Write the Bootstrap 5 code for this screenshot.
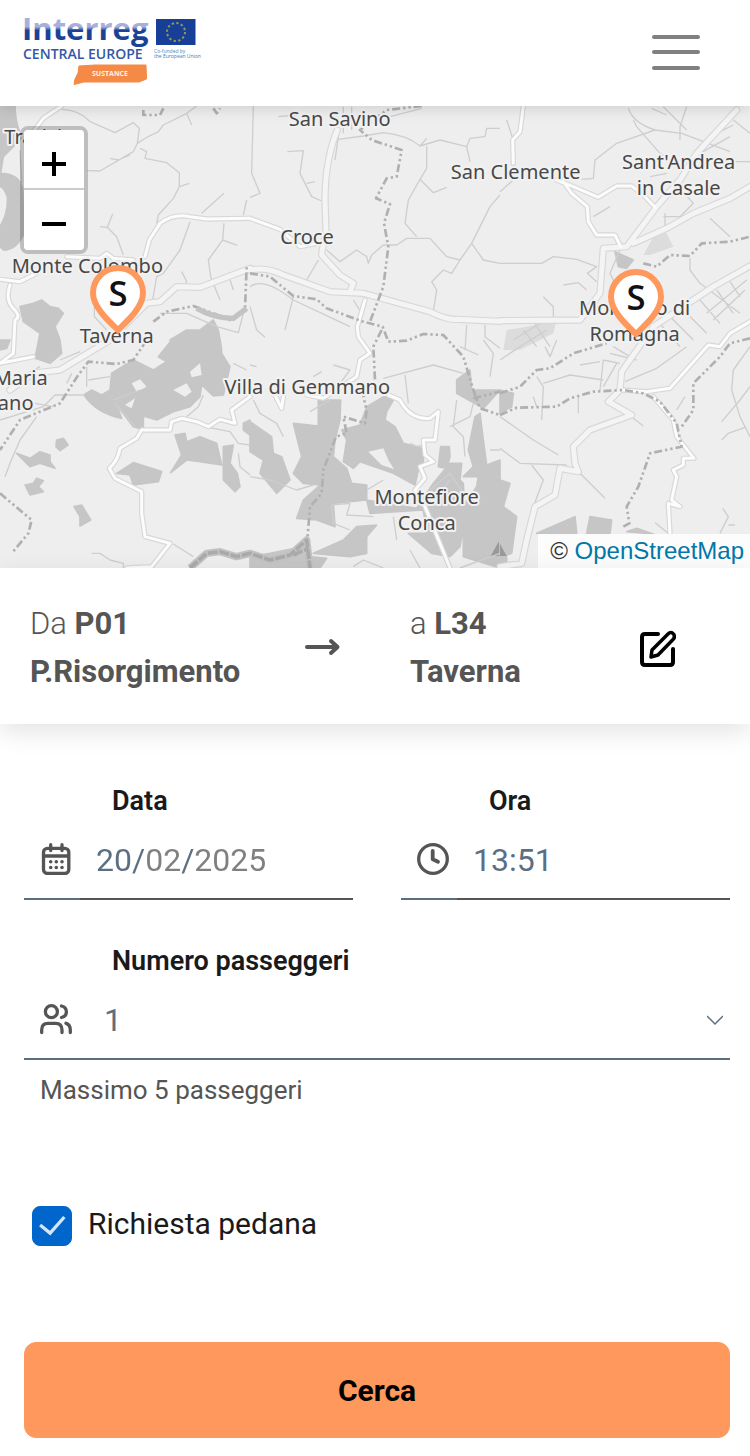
<!DOCTYPE html>
<html lang="it">
<head>
<meta charset="utf-8">
<meta name="viewport" content="width=device-width, initial-scale=1">
<title>Sustance - Prenotazione</title>
<link href="https://cdn.jsdelivr.net/npm/bootstrap@5.3.0/dist/css/bootstrap.min.css" rel="stylesheet">
<style>
  body { font-family: Roboto, "Noto Sans", sans-serif; color: #1a1a1a; background: #fff; }
  .site-bar { padding: 16px 44px 16px 24px; box-shadow: 0 2px 14px rgba(0,0,0,.14); z-index: 3; }
  .site-logo { width: 176px; height: 74px; overflow: visible; }
  .site-bar .navbar-toggler { padding: 0 6px; border: 0; }
  .map-view { background: #eee; }
  .map-view > svg { aspect-ratio: 750 / 462; }
  .wood { fill: #c6c6c6; stroke: #c6c6c6; stroke-width: 5; stroke-linejoin: round; }
  .clearing { fill: #eee; }
  .lane { fill: none; stroke: #cecece; stroke-width: 4; stroke-linejoin: round; }
  .road-set { fill: none; stroke-linejoin: round; stroke-linecap: round; }
  .edge { stroke: #d8d8d8; }
  .fill-road { stroke: #f8f8f8; }
  .edge .wide { stroke-width: 22; }
  .edge .slim { stroke-width: 16; }
  .fill-road .wide { stroke-width: 15; stroke: #f4f4f4; }
  .fill-road .slim { stroke-width: 9; stroke: #fcfcfc; }
  .limit { fill: none; stroke: #b0b0b0; stroke-width: 8; stroke-dasharray: 24 9 7 9 7 9; stroke-linejoin: round; }
  .ridge { fill: none; stroke: #aaa; stroke-width: 11; stroke-linejoin: round; }
  .place { font: 400 60px "Noto Sans", sans-serif; fill: #484848; stroke: #f1f1f1; stroke-width: 12; stroke-linejoin: round; paint-order: stroke; text-anchor: middle; }
  .pin-letter { font: 600 104px "Open Sans", sans-serif; fill: #111; text-anchor: middle; }
  .zoom-box { top: 20px; left: 20px; border: 4px solid rgba(0,0,0,.2); border-radius: 8px; background-clip: padding-box; }
  .zoom-box button { width: 60px; height: 60px; border: 0; padding: 0; background: #fff; display: flex; align-items: center; justify-content: center; border-radius: 0 0 4px 4px; }
  .zoom-box button:first-child { border-bottom: 2px solid #ccc; border-radius: 4px 4px 0 0; }
  .credit { background: rgba(255,255,255,.8); font: 24px/34px "Liberation Sans", sans-serif; color: #333; padding: 0 6px 0 12px; }
  .credit a { color: #0078a8; text-decoration: none; }
  .route-bar { display: grid; grid-template-columns: 275fr 105fr 230fr 110fr; padding: 32px 0 28px 30px; box-shadow: 0 8px 24px rgba(0,0,0,.11); color: #555; font-size: 31px; line-height: 48px; font-weight: 300; }
  .route-bar strong { font-weight: 700; }
  .trip-form { padding: 58px 20px 18px 24px; }
  .trip-form .row { --bs-gutter-x: 48px; --bs-gutter-y: 42px; }
  .field-label { display: block; font-size: 27px; line-height: 38px; font-weight: 600; padding-left: 88px; }
  .line-group { height: 80px; }
  .line-icon { width: 56px; padding: 0 8px 0 16px; border-bottom: 2px solid #5c6f82; color: #555; display: flex; align-items: center; }
  .line-group .form-control, .line-group .form-select { border: 0; border-bottom: 2px solid #555; border-radius: 0; font-size: 32px; line-height: 48px; color: #5c6f82; padding: 2px 16px 0; background-color: transparent; }
  .line-group .form-select { border-color: #5c6f82; padding-left: 24px; background-position: right 7px center; background-size: 16px 16px;
    background-image: url("data:image/svg+xml,%3csvg xmlns='http://www.w3.org/2000/svg' viewBox='0 0 16 16'%3e%3cpath fill='none' stroke='%235c6f82' stroke-width='1.5' d='M0 5l8 8 8-8'/%3e%3c/svg%3e"); }
  /* the day and the separators are darker than month and year */
  .line-group .date-text { -webkit-text-fill-color: transparent; background: linear-gradient(90deg, #5c6f82 0 65px, #808080 65px 101px, #5c6f82 101px 114px, #808080 114px); -webkit-background-clip: text; background-clip: text; }
  .field-help { font-size: 26px; line-height: 40px; color: #555; padding: 10px 16px 0; }
  .ramp-check { gap: 16px; padding: 96px 8px; min-height: 0; margin: 0; }
  .ramp-check .form-check-input { width: 40px; height: 40px; border-radius: 8px; margin: 0; float: none; flex: none; }
  .ramp-check .form-check-input:checked { background-color: #06c; border-color: #06c;
    background-image: url("data:image/svg+xml,%3csvg xmlns='http://www.w3.org/2000/svg' viewBox='0 0 40 40'%3e%3cpath fill='none' stroke='%23d5e5f5' stroke-width='3.5' d='M7.500 19l10.500 8.500L33 10.500'/%3e%3c/svg%3e"); }
  .ramp-check label { font-size: 30px; line-height: 36px; }
  .search-btn { --bs-btn-bg: #ff985c; --bs-btn-color: #000; --bs-btn-hover-bg: #f58a4b; --bs-btn-border-color: #ff985c; height: 96px; border-radius: 12px; font-size: 30px; font-weight: 700; }
</style>
</head>
<body>
<nav class="navbar site-bar bg-white position-relative">
  <a class="navbar-brand p-0 m-0 d-flex" href="#" aria-label="Interreg Central Europe Sustance">
    <svg class="site-logo" viewBox="24 16 176 74">
      <defs><linearGradient id="inkFade" gradientUnits="userSpaceOnUse" x1="0" x2="0" y1="18" y2="44"><stop offset=".34" stop-color="#a9afdc"/><stop offset=".48" stop-color="#1c4296"/></linearGradient></defs>
      <text x="22" y="40" font-family="Open Sans" font-weight="700" font-size="31" fill="url(#inkFade)">Interreg</text>
      <text x="23" y="59" font-family="Open Sans" font-weight="600" font-size="14" fill="#3457a5">CENTRAL EUROPE</text>
      <rect x="156" y="19" width="39.500" height="26" fill="#173f97"/>
      <circle cx="176" cy="32" r="9" fill="none" stroke="#8f9a4c" stroke-width="2" stroke-dasharray="2.400 2.312"/>
      <text x="154" y="53" font-family="Open Sans" font-size="5" fill="#4a86bd">Co-funded by</text>
      <text x="154" y="58" font-family="Open Sans" font-size="5" fill="#3f78b5">the European Union</text>
      <path d="M79 66L95 65 146 65 146.500 79 139 82 84 82 74 84.500 75 79 78 73Z" fill="#f48a45" stroke="#f48a45" stroke-linejoin="round"/>
      <text x="110" y="75.500" text-anchor="middle" font-family="Open Sans" font-weight="700" font-size="7" fill="#fff0e6">SUSTANCE</text>
    </svg>
  </a>
  <button class="navbar-toggler" type="button" aria-label="Menu">
    <svg class="d-block" width="48" height="36" viewBox="0 0 48 36" stroke="#808080" stroke-width="4" stroke-linecap="round"><path d="M2 2H46M2 17H46M2 33H46"/></svg>
  </button>
</nav>

<section class="map-view position-relative overflow-hidden" aria-label="Mappa">
  <svg class="d-block w-100" viewBox="0 18 2250 1386">
    <!-- woods -->
    <path class="wood" d="M0 18H45Q48 90 70 110L10 170 0 230ZM0 220Q60 220 68 270L72 400Q50 450 10 450L0 440V380Q25 340 22 290Q10 260 0 260ZM60 620L100 610 125 600 150 620 175 625 190 640 165 680 180 720 185 760 150 790 105 775 120 700 70 665ZM510 720L560 690 600 690 640 660 655 690 665 750 540 760Z"/>
    <g transform="translate(0 720)">
      <path class="wood" d="M475 50L515 0H660L665 40 690 80 670 165 640 168 605 135 600 170 570 200 520 215 470 240 430 228 430 268 400 260 350 195 365 235Q290 220 252 165L275 150 305 165 330 150 335 100 400 60 460 90 500 65ZM170 300L190 295 204 315 180 332 168 320ZM50 340L90 355 120 335 150 345V365L165 385 120 370 90 380ZM75 435L100 430 110 415 130 422 115 440 130 455 90 465ZM222 500L245 495 272 540 240 558V530ZM350 400L400 368 485 395 475 425 400 435 390 405ZM525 285L555 280 560 305 600 290 650 310 665 375 600 365 560 360 512 398 545 345ZM670 320L700 315 690 370 712 400 720 440 705 455 670 420ZM730 250L750 240V285L730 270ZM0 0H30L20 25 0 30Z"/>
      <path class="clearing" d="M395 130L420 118 440 140 410 155ZM520 150L560 130 575 155 555 170ZM570 95L600 70 605 105 575 112ZM375 195L405 175 395 205Z"/>
    </g>
    <g transform="translate(750 720)">
      <path class="wood" d="M0 245L65 290 70 340 95 350 120 420 80 460 30 400 40 360 0 335ZM130 250L205 258V180H272L270 240 255 300 250 350 290 385 305 430 350 435V480L250 490 255 560 200 540 140 535 160 480 210 435 160 430 130 400 155 350ZM280 365L290 300 275 270 330 255 350 200 410 165 430 180 410 215 405 240 435 260 450 290 460 310 520 325V370L505 390 495 435 430 400 330 365 310 385ZM350 480L500 505 550 430 600 370H635L630 420 640 430 645 530 630 620 600 650 545 640 475 580 530 580 520 510 360 520ZM572 320L598 320 600 350 590 385 565 380ZM690 220L700 300 710 375 750 360V684L640 650 640 500 680 440 685 410 640 410 670 380 655 330 675 230ZM620 120L660 90 665 150 750 150 700 205 620 160ZM190 640L280 600 320 560 380 555 350 590V640L300 650ZM0 650L60 640 160 620 180 650 230 655 210 684H0Z"/>
      <path class="clearing" d="M355 335L400 325 415 360 432 388 395 375Z"/>
      <path fill="#999" d="M722 648L746 605 770 648Z"/>
    </g>
    <g transform="translate(1500 720)">
      <path class="wood" d="M0 420L30 430 10 500 50 530 35 640 20 645V684H0ZM110 580L225 530 230 580ZM270 530L335 540 330 580H260ZM380 575L410 565 460 582ZM0 150L40 160 35 200 0 220Z"/>
      <path fill="#999" d="M0 612L20 648H0Z"/>
    </g>
    <g transform="translate(1500 0)">
      <path class="wood" d="M345 455L400 480 380 505 355 500Z"/>
      <path fill="#dcdcdc" d="M430 465L460 410 500 400 520 440 450 465ZM20 690L80 680 170 660 160 700 60 750 10 750Z"/>
    </g>
    <!-- lanes -->
    <path class="lane" d="M185 28Q240 30 270 65L345 98 400 68 418 85 412 130Q440 110 475 95L490 75 560 40 590 18M412 130L400 155 300 213 262 212M420 145L440 155 435 175 500 188 538 218V260L520 295 475 345 470 370M538 260L568 250M338 342L322 382 350 410 370 465M300 380L322 382M605 340L672 280M570 365L540 450 490 520 470 530 458 600M672 370L668 420 625 480 632 530 660 600M668 420L712 436M545 515L560 545 550 570M690 540L700 570M560 40L575 75M283 590V650L320 690M730 345L740 300M480 640L560 640 650 680 715 698 730 640M65 250L60 150M330 175L355 180 390 165"/>
    <path class="lane" transform="translate(750 0)" d="M265 118L340 108 400 98Q470 105 510 138L530 115M510 138L570 120 650 140 660 115 705 110 710 85 750 85M530 138V205L510 238 475 300 465 370 500 410M510 238L550 278 590 262M230 450L270 485 320 450 350 470 355 490 365 465 400 435 440 435 470 415 540 415 590 470 630 480 665 430 720 320 750 285M665 430L700 480 750 490M630 480L605 520 580 510 545 545 560 570 550 635M10 18L5 220 30 280 0 292M112 155L160 152 150 220 185 290 215 303M265 110L255 180M205 480L170 540M0 560Q40 530 130 600L300 680M130 590L105 690M0 620L20 690 45 712M400 55L515 25M310 600L335 640M650 675L645 750M705 675V710L750 745M280 20V100M305 20V90M85 50L140 45M170 250L195 245M650 140L660 185"/>
    <path class="lane" transform="translate(1500 0)" d="M385 25Q400 70 465 90L350 130 285 180 280 235 245 238M465 90L545 100 690 155M400 60L410 80 480 160 540 210M490 20L560 90M560 20L540 80V120M0 490H125L160 470 230 478 290 500 262 520 290 545M330 320L280 350M20 60L40 120M0 275L40 240M190 555L235 548 260 570M130 590L160 620V660M540 265L580 310 540 350 490 350M630 355L690 410M700 60L750 100M750 185H640M570 475V510L600 550 720 640M600 160L690 110M40 720L120 670M60 740L140 690M100 665L150 740M70 690L110 740M620 640L740 540M640 660L735 570M560 640L620 700M600 600L660 670M650 570L700 640M690 545L720 590M500 640L580 720M470 660L540 740M455 25L500 45M650 100L700 75M360 450L330 520 350 560M450 230L500 220M495 340V400"/>
    <path class="lane" transform="translate(0 720)" d="M110 230L60 300 30 370 15 410M0 240L130 200 165 165 255 165M275 640L300 640 330 660 370 670V684M520 612L580 650M610 165L595 200 560 230M345 190L410 265M625 262L690 275 715 310 750 315M715 340L720 380 750 405M260 80V140M200 130L215 100M265 120L330 110M700 70L740 90M340 180L420 150M30 130L120 80M105 190L160 200M180 60L240 35"/>
    <path class="lane" transform="translate(750 720)" d="M400 115L550 75 640 100M465 105L475 190M0 410L60 420 140 450 190 435M245 495L300 490 290 525 370 530M10 180L30 220 80 250 100 290M180 215L240 180M250 75L300 90 270 130M630 20L685 45M700 0L730 40 720 110M620 180L610 260 640 290 645 350M600 260L660 230 670 190M720 330H750M480 630L510 684M310 680L340 660 400 684M480 310L500 320 520 315M430 530L440 600M190 110L215 95M0 75L20 80M540 450L600 400 640 460M550 480L600 420M350 450L400 420M630 684L750 640M245 495L250 550 300 570"/>
    <path class="lane" transform="translate(1500 720)" d="M0 325L60 370 200 375M175 345L100 300 0 230M95 375L130 420 100 500M240 400L315 475M110 110L130 140 125 240M130 130L210 105 310 120M375 125L470 85 560 20M235 170V220M750 20L700 90 695 150 720 230 750 290M665 300L685 280 735 262M665 245L720 180 750 140M668 505L685 530 660 580M685 555H705M465 548L505 580M400 235L430 258M310 60L300 150M350 70L310 140M310 60L360 70M330 40L410 60M340 20L390 50M0 60L60 20M530 210L555 170M240 75L300 65M135 20L150 50 170 0M100 170L110 200"/>
    <!-- roads: an edge pass below a light pass -->
    <defs>
      <g id="widePaths" class="road-set">
        <path d="M750 505L600 562 530 560 480 605 440 610 400 650 330 720 230 780 180 810 100 820 30 870"/>
        <path transform="translate(750 0)" d="M262 90Q225 180 225 300L228 400Q215 450 215 465L270 525 310 550 300 575M0 510Q50 500 100 525L240 575 340 580 540 635Q590 660 620 658L750 664"/>
        <path transform="translate(1500 0)" d="M710 30L590 160 540 240 470 320 380 440 310 445 300 580 240 660 0 662M750 260L690 295 580 340 500 385 400 430M750 498L640 560 460 680 365 815 360 870 325 905 395 945 270 990 220 1040 225 1090 235 1115 180 1105 165 1185 105 1220 80 1320 65 1390 0 1400"/>
      </g>
      <g id="slimPaths" class="road-set">
        <path d="M185 18L130 55 100 95M435 470L448 420 480 370Q520 340 570 350L620 357 750 355M0 538L60 545 110 520M30 555Q15 600 40 625Q65 650 45 660L40 760 0 790 100 770M200 470L300 475 320 460 340 475 400 480M750 890L695 930 705 970 660 958 625 980 590 965 545 955 515 965 510 990 425 990 410 1015 360 1045Q355 1080 328 1105L345 1135 425 1175 425 1240 435 1310 510 1330 455 1400 380 1404"/>
        <path transform="translate(750 0)" d="M345 600L322 680 325 710 360 760 330 780 320 830 220 895 170 885M0 355L90 388 150 440 200 430M75 885L95 925 100 890M415 885L450 900Q480 960 540 955L565 935 555 1020 520 1020 525 1065 550 1085 510 1100 525 1135 495 1170 525 1220 600 1404"/>
        <path transform="translate(1500 0)" d="M70 18L60 95 38 120 40 190M170 240L220 260 295 292 350 258 395 258 430 285 465 322M190 245L215 280 262 320 265 365 290 405 345 405 362 440M750 665L690 700 660 740 625 735 510 865 440 875 365 870M460 890L520 960 530 1010 582 1075 550 1075 550 1095 520 1110 530 1130 515 1200 540 1220 505 1210 510 1300"/>
      </g>
    </defs>
    <g class="edge"><g class="wide"><use href="#widePaths"/></g><g class="slim"><use href="#slimPaths"/></g></g>
    <g class="fill-road"><g class="wide"><use href="#widePaths"/></g><g class="slim"><use href="#slimPaths"/></g></g>
    <!-- municipal limits and rivers -->
    <path class="limit" d="M430 30V45L480 45 490 25M640 25L650 40 660 25M460 665L500 635 580 618 640 640 690 660 735 625 740 500M440 720L400 780 350 792 265 785 235 825 180 910 60 960 0 1050M0 1180L95 1260 85 1300 35 1360"/>
    <path class="limit" transform="translate(750 0)" d="M515 18L410 30 330 90 365 120 455 150 440 230 410 235 378 295 420 312 402 370 415 440 400 560 360 665M395 690L370 740 375 840 340 890 350 930 345 970 280 950 290 1000 258 1010 220 1110 215 1180 180 1220 172 1320M0 520L60 530 130 588 200 598 230 625 340 665 398 680 415 725 470 722 520 702 580 705 640 770 670 870 690 925 750 945M670 895L750 875"/>
    <path class="limit" transform="translate(1500 0)" d="M430 490L470 500 510 465 570 468 605 430 690 425 750 410M0 880L60 860 110 810 150 805 220 760 320 730M0 945L50 923 170 920 210 895 280 875 370 870 430 880 480 905 530 970 545 1040 450 1060 415 1160 380 1220 388 1270 370 1280M750 715L690 730 660 770 580 850V930L545 980"/>
    <path fill="none" stroke="#c3c3c3" stroke-width="16" d="M590 625Q640 655 700 655L740 625"/>
    <path fill="none" stroke="#c3c3c3" stroke-width="22" stroke-linejoin="round" d="M570 1404L620 1360 660 1355 710 1370 750 1360 810 1380 870 1365 920 1320 930 1404"/>
    <path class="ridge" stroke-dasharray="30 5" d="M570 1404L620 1360 660 1355 710 1370 750 1360 810 1380 870 1365 920 1320 930 1404M880 1365L925 1345"/>
    <!-- place names -->
    <g class="place">
      <text x="100" y="132">Trarivi</text><text x="1019" y="79">San Savino</text><text x="1547" y="237">San Clemente</text>
      <text x="2036" y="207">Sant'Andrea</text><text x="2036" y="284">in Casale</text><text x="921" y="432">Croce</text>
      <text x="262" y="519">Monte Colombo</text><text x="350" y="728">Taverna</text><text x="1904" y="645">Morciano di</text><text x="1904" y="723">Romagna</text>
      <text x="62" y="854">Maria</text><text x="47" y="930">ano</text><text x="922" y="882">Villa di Gemmano</text>
      <text x="1280" y="1212">Montefiore</text><text x="1280" y="1290">Conca</text>
    </g>
    <defs>
      <g id="stopPin"><path d="M0 690C-22 668-75 624-75 579A75 75 0 0 1 75 579C75 624 22 668 0 690Z" fill="#fff" stroke="#ff985c" stroke-width="18"/><text class="pin-letter" x="0" y="617">S</text></g>
    </defs>
    <use href="#stopPin" x="354"/>
    <use href="#stopPin" x="1908" y="12"/>
  </svg>
  <div class="zoom-box position-absolute">
    <button type="button" aria-label="Ingrandisci"><svg class="mt-2" width="26" height="26" stroke="#000" stroke-width="4"><path d="M1 14H25M13 2V26"/></svg></button>
    <button type="button" aria-label="Riduci"><svg class="mt-2" width="26" height="26" stroke="#000" stroke-width="4"><path d="M1 13H25"/></svg></button>
  </div>
  <div class="credit position-absolute bottom-0 end-0">© <a href="#">OpenStreetMap</a></div>
</section>

<section class="route-bar bg-white align-items-center position-relative">
  <div>Da <strong>P01<br>P.Risorgimento</strong></div>
  <svg width="36" height="20" viewBox="0 0 36 20" fill="none" stroke="#555" stroke-width="4" stroke-linecap="round" stroke-linejoin="round"><path d="M2 9H32M26 3L32.500 9 26 15"/></svg>
  <div>a <strong>L34<br>Taverna</strong></div>
  <button class="btn p-0 border-0 text-start" type="button" aria-label="Modifica percorso">
    <svg width="36" height="38" viewBox="0 0 36 38" fill="none" stroke="#000" stroke-width="4" stroke-linecap="round" stroke-linejoin="round"><path d="M18 5H5Q2 5 2 8V33Q2 36 5 36H30Q33 36 33 33V20"/><path stroke-width="3.500" d="M11 28L12 21 28 5Q31 2 33.500 5Q35.500 8 33 10.500L18 26Z"/></svg>
  </button>
</section>

<form class="trip-form">
  <div class="row">
    <div class="col-6">
      <label class="field-label" for="day">Data</label>
      <div class="line-group d-flex">
        <span class="line-icon"><svg width="32" height="32" viewBox="0 0 32 32" fill="none" stroke="currentColor" stroke-width="3.300" stroke-linecap="round"><rect x="3.500" y="5.300" width="25.300" height="25.200" rx="4"/><path d="M4 13H28M10.700 1.700V7.500M22 1.700V7.500"/><path stroke-width="3.600" d="M10.700 18.800h.01M16.300 18.800h.01M22 18.800h.01M10.700 24.500h.01M16.300 24.500h.01M22 24.500h.01"/></svg></span>
        <input class="form-control date-text" id="day" type="text" inputmode="numeric" value="20/02/2025">
      </div>
    </div>
    <div class="col-6">
      <label class="field-label" for="hour">Ora</label>
      <div class="line-group d-flex">
        <span class="line-icon"><svg width="32" height="32" viewBox="0 0 32 32" fill="none" stroke="currentColor" stroke-width="3.300" stroke-linecap="round" stroke-linejoin="round"><circle cx="16" cy="16" r="14.300"/><path stroke-width="3.800" d="M15.700 8V16.300L21 18.700"/></svg></span>
        <input class="form-control" id="hour" type="text" inputmode="numeric" value="13:51">
      </div>
    </div>
    <div class="col-12">
      <label class="field-label" for="people">Numero passeggeri</label>
      <div class="line-group d-flex">
        <span class="line-icon"><svg width="32" height="32" viewBox="0 0 32 32" fill="none" stroke="currentColor" stroke-width="3.300" stroke-linecap="round"><circle cx="11.400" cy="8.700" r="6"/><path d="M21.500 3C28 4.500 28 13 21.500 14.500M1.700 29.500V27Q1.700 20.300 8 20.300H15.500Q22 20.300 22 27V29.500M26 20.300Q30.300 21.500 30.300 27V29.500"/></svg></span>
        <select class="form-select" id="people" aria-describedby="peopleHelp"><option selected>1</option><option>2</option><option>3</option><option>4</option><option>5</option></select>
      </div>
      <div class="field-help" id="peopleHelp">Massimo 5 passeggeri</div>
    </div>
  </div>
  <div class="form-check ramp-check d-flex">
    <input class="form-check-input" type="checkbox" id="ramp" checked>
    <label for="ramp">Richiesta pedana</label>
  </div>
  <button class="btn search-btn w-100" type="submit">Cerca</button>
</form>
<script src="https://cdn.jsdelivr.net/npm/bootstrap@5.3.0/dist/js/bootstrap.bundle.min.js"></script>
</body>
</html>
